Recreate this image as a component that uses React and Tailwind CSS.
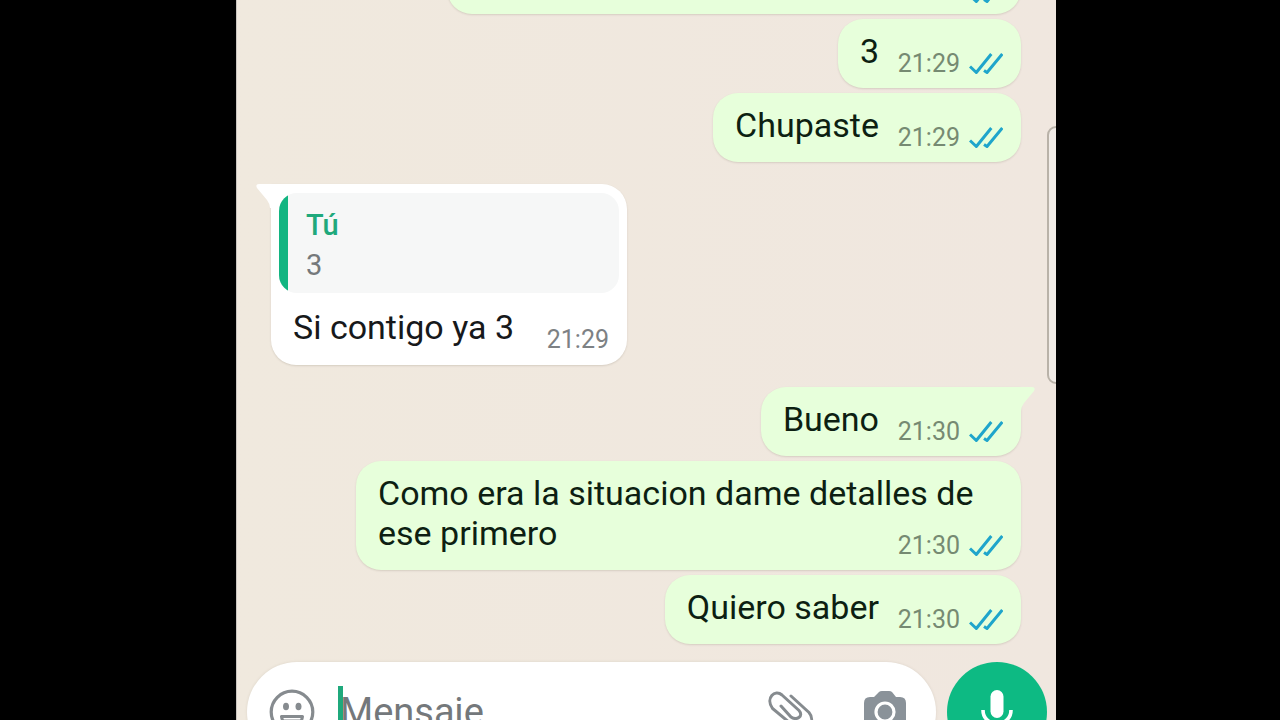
import clsx from "clsx";

const messages = [
  { id: 1, mine: true, text: "", time: "", className: "w-[574px]" },
  { id: 2, mine: true, text: "3", time: "21:29" },
  { id: 3, mine: true, text: "Chupaste", time: "21:29" },
  { id: 4, mine: false, tail: true, quote: { author: "Tú", text: "3" }, text: "Si contigo ya 3", time: "21:29", className: "my-[17px] w-[356px]" },
  { id: 5, mine: true, tail: true, text: "Bueno", time: "21:30" },
  { id: 6, mine: true, text: "Como era la situacion dame detalles de ese primero", time: "21:30" },
  { id: 7, mine: true, text: "Quiero saber", time: "21:30" },
];

function ReadTicks() {
  return (
    <svg viewBox="0 0 34 24" className="h-6 w-[34px] shrink-0" fill="none" stroke="#1fa5cb" strokeWidth="3" aria-label="Leído">
      <path d="M1 14.5 7.3 20.5 22.3 2M15 18.5 18 20.5 33.3 2" strokeLinejoin="round" />
    </svg>
  );
}

function Tail({ mine }) {
  return (
    <svg
      viewBox="0 0 16 24"
      className={clsx("absolute top-0 h-6 w-4", mine ? "-right-[14px] fill-[#e7ffdb]" : "-left-[15px] -scale-x-100 fill-white")}
      aria-hidden="true"
    >
      <path d="M0 0H13Q17 0 15 4L5 16Q2 20 2 24H0Z" />
    </svg>
  );
}

function Quote({ author, text }) {
  return (
    <blockquote className="mx-2 mt-[9px] overflow-hidden rounded-[18px] bg-[#f6f7f7]">
      <div className="border-l-[9px] border-[#12b581] px-[18px] pt-3 pb-2 text-[29px] leading-[40px]">
        <p className="font-medium text-[#1fa97c]">{author}</p>
        <p className="text-[#75797b]">{text}</p>
      </div>
    </blockquote>
  );
}

function Message({ mine, tail, quote, text, time, className }) {
  return (
    <li
      className={clsx(
        "relative max-w-[665px] rounded-[25px] shadow-[0_1px_2px_rgba(80,70,50,0.16)]",
        mine ? "self-end bg-[#e7ffdb] text-[#0d1f12]" : "self-start bg-white text-[#17191b]",
        tail && (mine ? "rounded-tr-none" : "rounded-tl-none"),
        className,
      )}
    >
      {tail && <Tail mine={mine} />}
      {quote && <Quote {...quote} />}
      <div className={clsx("grid pr-[18px] pl-[22px]", quote ? "pt-[14px] pb-[18px]" : "pt-3 pb-[17px]")}>
        <p className="col-start-1 row-start-1 min-h-10 text-[34px] leading-[40px]">
          {text}
          {/* keeps the last line clear of the time */}
          <span className={clsx("inline-block h-1", mine ? "w-[124px]" : "w-[80px]")} />
        </p>
        <div
          className={clsx(
            "col-start-1 row-start-1 -mb-2 flex items-center gap-[9px] self-end justify-self-end text-[25px] leading-[30px]",
            mine ? "text-[#768a72]" : "text-[#7d8184]",
          )}
        >
          {time && <time>{time}</time>}
          {mine && <ReadTicks />}
        </div>
      </div>
    </li>
  );
}

function SmileIcon() {
  return (
    <svg viewBox="0 0 46 46" className="size-[46px]" fill="none" stroke="#868b8f" strokeWidth="3.2" aria-hidden="true">
      <circle cx="23" cy="23" r="20.8" />
      <ellipse cx="17" cy="17.5" rx="3" ry="3.8" fill="#868b8f" stroke="none" />
      <ellipse cx="29.5" cy="17.5" rx="3" ry="3.8" fill="#868b8f" stroke="none" />
      <path d="M12.5 27.5H33.5Q32 37 23 37T12.5 27.5Z" strokeWidth="3" strokeLinejoin="round" />
      <path d="M15 31.5H31" strokeWidth="2" />
    </svg>
  );
}

function ClipIcon() {
  return (
    <svg viewBox="0 0 46 46" className="size-[46px]" fill="none" stroke="#868b8f" strokeWidth="3" strokeLinecap="round" aria-hidden="true">
      <path d="M23 7 41 23.5C49 33 37 45 28 39L4.5 19.5C-3 9 7 0 14 6L31 21.5C36 27 29 32 23 28L13 17" />
    </svg>
  );
}

function CameraIcon() {
  return (
    <svg viewBox="0 0 42 42" className="size-[42px]" aria-hidden="true">
      <path d="M15 1Q16 0 18 0H25Q27 0 28 1L32 6H36Q42 6 42 12V34Q42 40 36 40H6Q0 40 0 34V12Q0 6 6 6H10Z" fill="#8a9299" />
      <circle cx="21" cy="21" r="9" fill="#8a9299" stroke="#fff" strokeWidth="3.2" />
    </svg>
  );
}

function MicIcon() {
  return (
    <svg viewBox="0 0 34 46" className="h-[46px] w-[34px]" aria-hidden="true">
      <rect x="10.5" y="1" width="13" height="28" rx="6.5" fill="#fff" />
      <path d="M3 21C3 39 31 39 31 21M17 34V43" fill="none" stroke="#fff" strokeWidth="3.6" />
    </svg>
  );
}

function Composer() {
  return (
    <form className="flex h-[58px] shrink-0 items-start gap-[11px] pr-[9px] pl-[10px]" onSubmit={(e) => e.preventDefault()}>
      <div className="flex h-[100px] min-w-0 flex-1 items-center rounded-full bg-white pr-[30px] pl-[22px] shadow-[0_0_3px_rgba(80,70,50,0.12)]">
        <button type="button" aria-label="Emojis" className="shrink-0">
          <SmileIcon />
        </button>
        <div className="relative ml-[23px] min-w-0 flex-1">
          <input
            type="text"
            aria-label="Mensaje"
            placeholder="Mensaje"
            className="block h-[52px] w-full bg-transparent pl-[2px] text-[38px] text-[#17191b] outline-none placeholder:text-[#74787b] placeholder:opacity-100"
          />
          <span className="absolute top-0 left-0 h-[52px] w-[5px] bg-[#1fa97c]" />
        </div>
        <button type="button" aria-label="Adjuntar" className="shrink-0">
          <ClipIcon />
        </button>
        <button type="button" aria-label="Cámara" className="ml-[50px] shrink-0">
          <CameraIcon />
        </button>
      </div>
      <button type="button" aria-label="Grabar audio" className="flex size-[100px] shrink-0 items-center justify-center rounded-full bg-[#0dba83]">
        <MicIcon />
      </button>
    </form>
  );
}

export default function App() {
  return (
    <div className="flex h-screen justify-center overflow-hidden bg-black pl-3 font-[Roboto,sans-serif]">
      <main className="relative flex w-full max-w-[820px] flex-col overflow-hidden border-l border-[#c9c5c0] bg-linear-to-r from-[#f0e9de] to-[#f0e7df]">
        <ul className="flex min-h-0 flex-1 flex-col justify-end gap-[5px] overflow-hidden pr-[35px] pb-[18px] pl-[34px]">
          {messages.map((message) => (
            <Message key={message.id} {...message} />
          ))}
        </ul>
        <Composer />
        <div className="absolute top-[126px] -right-4 h-[258px] w-[25px] rounded-l-[9px] border-2 border-[#b9b2a8] bg-[#f1ece7]" />
      </main>
    </div>
  );
}
